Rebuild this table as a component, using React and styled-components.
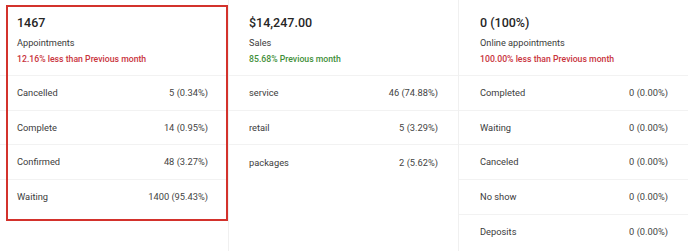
import React from "react";
import styled, { createGlobalStyle } from "styled-components";

const Global = createGlobalStyle`
  html, body { margin: 0; padding: 0; background: #ffffff; }
  body { font-family: Roboto, "Noto Sans", Arial, sans-serif; -webkit-font-smoothing: antialiased; }
  * { box-sizing: border-box; }
`;

const Page = styled.div`
  width: 688px;
  height: 251px;
  overflow: hidden;
  display: grid;
  grid-template-columns: 229px 230px 229px;
  background: #ffffff;
`;

const Card = styled.section`
  position: relative;
  background: #ffffff;
  border-right: ${(p) => (p.$last ? "none" : "1px solid #f0f0f0")};
  display: flex;
  flex-direction: column;
`;

const Header = styled.div`
  padding: 15px 20px 9px ${(p) => p.$padLeft || 20}px;
  display: flex;
  flex-direction: column;
  border-bottom: 1px solid #f2f2f2;
`;

const Total = styled.div`
  font-size: 12.5px;
  font-weight: 500;
  line-height: 16px;
  color: #262626;
`;

const Caption = styled.div`
  margin-top: 5px;
  font-size: 9.2px;
  line-height: 14px;
  color: #3c3c3c;
`;

const Trend = styled.div`
  margin-top: 2px;
  font-size: 8.7px;
  line-height: 14px;
  font-weight: 500;
  color: ${(p) => (p.$up ? "#3f8f3a" : "#c9343d")};
`;

const Row = styled.div`
  height: 34.7px;
  display: flex;
  align-items: center;
  justify-content: space-between;
  padding: 0 20px 1px ${(p) => p.$padLeft || 20}px;
  border-bottom: ${(p) => (p.$noLine ? "none" : "1px solid #f2f2f2")};
  font-size: 9.3px;
  color: #3c3c3c;
`;

const Label = styled.span``;
const Value = styled.span`
  color: #444;
`;

const Highlight = styled.div`
  position: absolute;
  left: 6px;
  top: 5px;
  width: 222px;
  height: 216px;
  border: 2px solid #d3322c;
  pointer-events: none;
`;

const cards = [
  {
    total: "1467",
    caption: "Appointments",
    trend: "12.16% less than Previous month",
    up: false,
    rows: [
      ["Cancelled", "5 (0.34%)"],
      ["Complete", "14 (0.95%)"],
      ["Confirmed", "48 (3.27%)"],
      ["Waiting", "1400 (95.43%)"],
    ],
    padLeft: 17,
    highlight: true,
  },
  {
    total: "$14,247.00",
    caption: "Sales",
    trend: "85.68% Previous month",
    up: true,
    rows: [
      ["service", "46 (74.88%)"],
      ["retail", "5 (3.29%)"],
      ["packages", "2 (5.62%)"],
    ],
    padLeft: 20,
  },
  {
    total: "0 (100%)",
    caption: "Online appointments",
    trend: "100.00% less than Previous month",
    up: false,
    rows: [
      ["Completed", "0 (0.00%)"],
      ["Waiting", "0 (0.00%)"],
      ["Canceled", "0 (0.00%)"],
      ["No show", "0 (0.00%)"],
      ["Deposits", "0 (0.00%)"],
    ],
    padLeft: 21,
    last: true,
  },
];

export default function App() {
  return (
    <>
      <Global />
      <Page>
        {cards.map((c, i) => (
          <Card key={i} $last={c.last}>
            <Header $padLeft={c.padLeft}>
              <Total>{c.total}</Total>
              <Caption>{c.caption}</Caption>
              <Trend $up={c.up}>{c.trend}</Trend>
            </Header>
            {c.rows.map(([l, v], j) => (
              <Row key={j} $padLeft={c.padLeft} $noLine={j === c.rows.length - 1}>
                <Label>{l}</Label>
                <Value>{v}</Value>
              </Row>
            ))}
            {c.highlight && <Highlight />}
          </Card>
        ))}
      </Page>
    </>
  );
}
